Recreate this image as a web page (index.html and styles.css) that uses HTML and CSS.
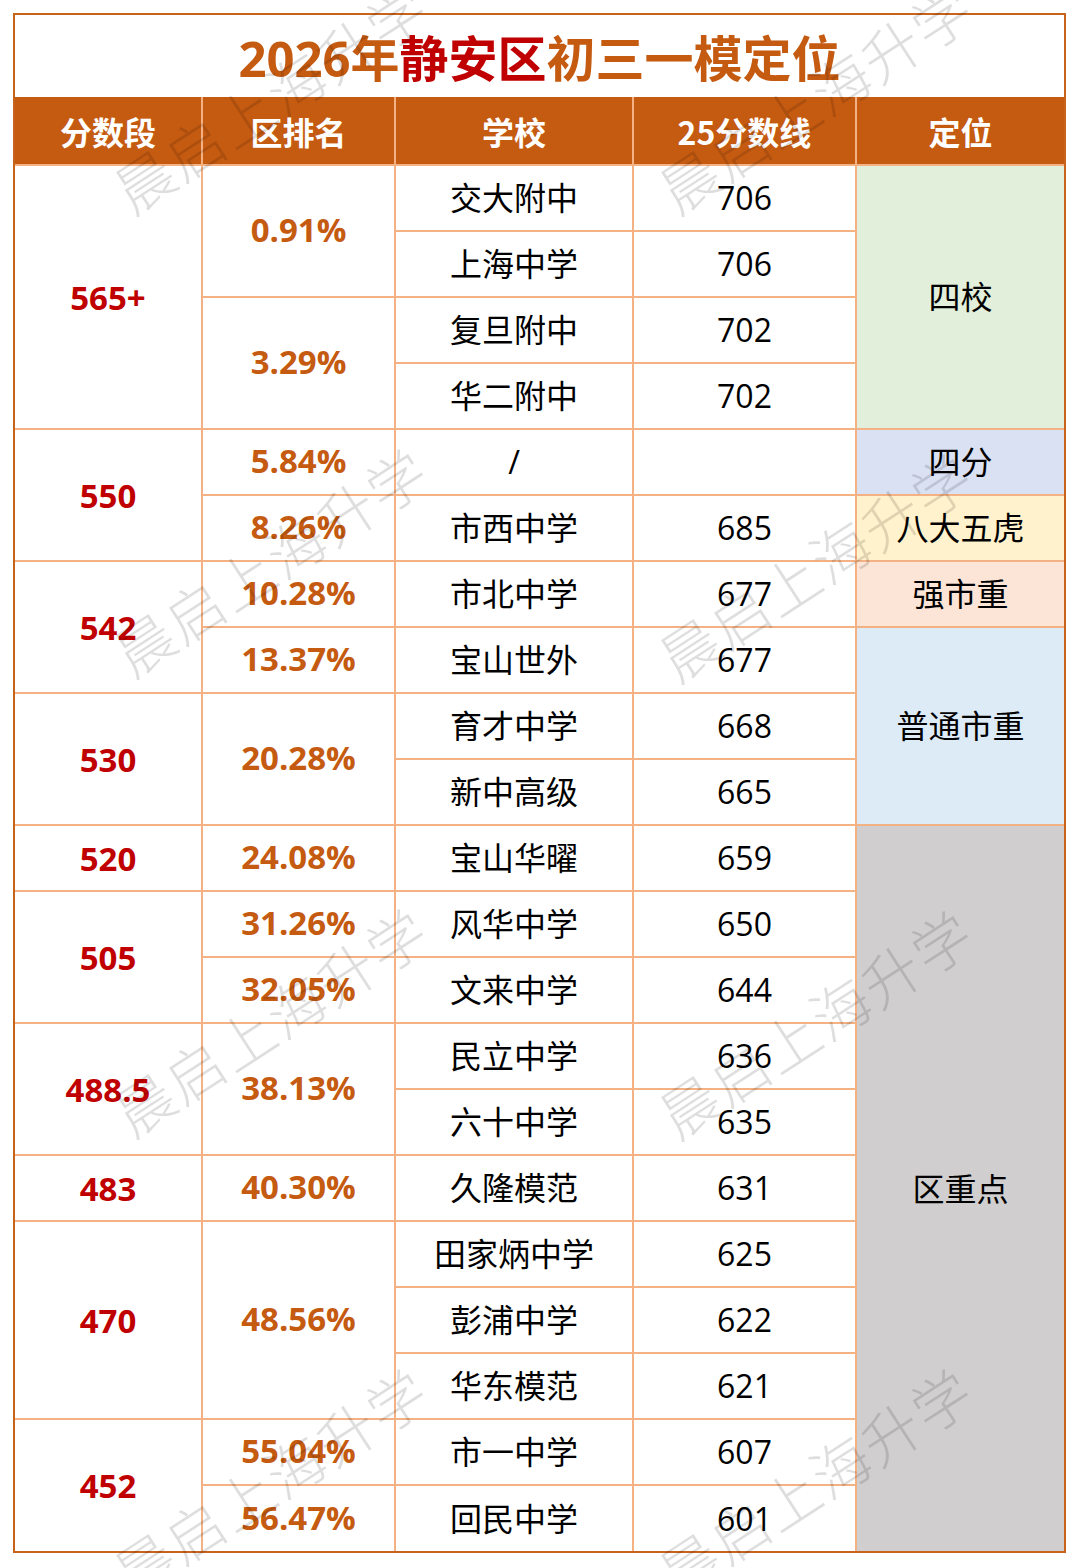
FILE: index.html
```html
<!DOCTYPE html>
<html lang="zh-CN">
<head>
<meta charset="utf-8">
<title>2026年静安区初三一模定位</title>
<link rel="stylesheet" href="styles.css">
</head>
<body>
<div class="page">
  <div class="sheet">
    <table class="grid">
      <colgroup>
        <col class="w1"><col class="w2"><col class="w3"><col class="w4"><col class="w5">
      </colgroup>
      <tr class="title-row">
        <td colspan="5" class="title"><span class="t-orange">2026年</span><span class="t-red">静安区</span><span class="t-orange">初三一模定位</span></td>
      </tr>
      <tr class="head">
        <th>分数段</th><th>区排名</th><th>学校</th><th>25分数线</th><th>定位</th>
      </tr>
      <tr>
        <td rowspan="4" class="score">565+</td>
        <td rowspan="2" class="pct">0.91%</td>
        <td>交大附中</td><td class="num">706</td>
        <td rowspan="4" class="pos c-green">四校</td>
      </tr>
      <tr><td>上海中学</td><td class="num">706</td></tr>
      <tr>
        <td rowspan="2" class="pct">3.29%</td>
        <td>复旦附中</td><td class="num">702</td>
      </tr>
      <tr><td>华二附中</td><td class="num">702</td></tr>
      <tr>
        <td rowspan="2" class="score">550</td>
        <td class="pct">5.84%</td>
        <td>/</td><td class="num"></td>
        <td class="pos c-lav">四分</td>
      </tr>
      <tr>
        <td class="pct">8.26%</td>
        <td>市西中学</td><td class="num">685</td>
        <td class="pos c-yellow">八大五虎</td>
      </tr>
      <tr>
        <td rowspan="2" class="score">542</td>
        <td class="pct">10.28%</td>
        <td>市北中学</td><td class="num">677</td>
        <td class="pos c-peach">强市重</td>
      </tr>
      <tr>
        <td class="pct">13.37%</td>
        <td>宝山世外</td><td class="num">677</td>
        <td rowspan="3" class="pos c-blue">普通市重</td>
      </tr>
      <tr>
        <td rowspan="2" class="score">530</td>
        <td rowspan="2" class="pct">20.28%</td>
        <td>育才中学</td><td class="num">668</td>
      </tr>
      <tr><td>新中高级</td><td class="num">665</td></tr>
      <tr>
        <td class="score">520</td>
        <td class="pct">24.08%</td>
        <td>宝山华曜</td><td class="num">659</td>
        <td rowspan="11" class="pos c-gray">区重点</td>
      </tr>
      <tr>
        <td rowspan="2" class="score">505</td>
        <td class="pct">31.26%</td>
        <td>风华中学</td><td class="num">650</td>
      </tr>
      <tr>
        <td class="pct">32.05%</td>
        <td>文来中学</td><td class="num">644</td>
      </tr>
      <tr>
        <td rowspan="2" class="score">488.5</td>
        <td rowspan="2" class="pct">38.13%</td>
        <td>民立中学</td><td class="num">636</td>
      </tr>
      <tr><td>六十中学</td><td class="num">635</td></tr>
      <tr>
        <td class="score">483</td>
        <td class="pct">40.30%</td>
        <td>久隆模范</td><td class="num">631</td>
      </tr>
      <tr>
        <td rowspan="3" class="score">470</td>
        <td rowspan="3" class="pct">48.56%</td>
        <td>田家炳中学</td><td class="num">625</td>
      </tr>
      <tr><td>彭浦中学</td><td class="num">622</td></tr>
      <tr><td>华东模范</td><td class="num">621</td></tr>
      <tr>
        <td rowspan="2" class="score">452</td>
        <td class="pct">55.04%</td>
        <td>市一中学</td><td class="num">607</td>
      </tr>
      <tr>
        <td class="pct">56.47%</td>
        <td>回民中学</td><td class="num">601</td>
      </tr>
    </table>
  </div>
  <div class="wm wm-a">晨启上海升学</div>
  <div class="wm wm-b">晨启上海升学</div>
  <div class="wm wm-c">晨启上海升学</div>
  <div class="wm wm-d">晨启上海升学</div>
  <div class="wm wm-e">晨启上海升学</div>
  <div class="wm wm-f">晨启上海升学</div>
  <div class="wm wm-g">晨启上海升学</div>
  <div class="wm wm-h">晨启上海升学</div>
</div>
</body>
</html>
```
FILE: styles.css
```css
html, body {
  margin: 0;
  padding: 0;
  background: #ffffff;
}

.page {
  position: relative;
  width: 1080px;
  height: 1568px;
  overflow: hidden;
  padding: 13px 0 0 13px;
  box-sizing: border-box;
  font-family: "Open Sans", "Noto Sans CJK SC", sans-serif;
  color: #000000;
}

.sheet {
  width: 1049px;
  border: 2px solid #c8631c;
}

.grid {
  width: 1049px;
  table-layout: fixed;
  border-collapse: collapse;
  border-style: hidden;
}

.w1 { width: 187px; }
.w2 { width: 193px; }
.w3 { width: 238px; }
.w4 { width: 223px; }
.w5 { width: 208px; }

.grid td,
.grid th {
  border: 2px solid #f4b183;
  padding: 0;
  text-align: center;
  vertical-align: middle;
  font-size: 32px;
  line-height: 1;
  height: 66px;
  box-sizing: border-box;
}

.grid tr { height: 66px; }

.title-row { height: 82px; }

.grid td.title {
  height: 82px;
  border-bottom-style: hidden;
  font-family: "Open Sans", "Noto Sans CJK SC", sans-serif;
  font-size: 49px;
  font-weight: 700;
  padding-top: 4px;
}

.t-orange { color: #c55a11; }
.t-red { color: #c00000; }

.head { height: 68px; }

.grid th {
  height: 68px;
  background: #c55a11;
  color: #ffffff;
  font-family: "Noto Sans CJK SC", sans-serif;
  font-size: 32px;
  font-weight: 700;
  border-top-style: hidden;
}

.grid td.score {
  color: #c00000;
  font-weight: 700;
  font-size: 33px;
}

.grid td.pct {
  color: #c55a11;
  font-weight: 700;
  font-size: 33px;
  padding-bottom: 3px;
}

.grid td.num {
  font-size: 32px;
}

.c-green { background: #e2efda; }
.c-lav { background: #d9e1f2; }
.c-yellow { background: #fff2cc; }
.c-peach { background: #fce4d6; }
.c-blue { background: #ddebf7; }
.c-gray { background: #d0cece; }

.wm {
  position: absolute;
  font-family: "Noto Sans CJK SC", sans-serif;
  font-weight: 300;
  font-size: 58px;
  letter-spacing: 2px;
  line-height: 1;
  color: rgba(0, 0, 0, 0.13);
  white-space: nowrap;
  transform: translate(-50%, -50%) rotate(-33deg);
  pointer-events: none;
}

.wm-a { left: 270px; top: 97px; }
.wm-b { left: 815px; top: 97px; }
.wm-c { left: 270px; top: 560px; }
.wm-d { left: 815px; top: 565px; }
.wm-e { left: 270px; top: 1020px; }
.wm-f { left: 815px; top: 1022px; }
.wm-g { left: 270px; top: 1480px; }
.wm-h { left: 815px; top: 1480px; }
```
